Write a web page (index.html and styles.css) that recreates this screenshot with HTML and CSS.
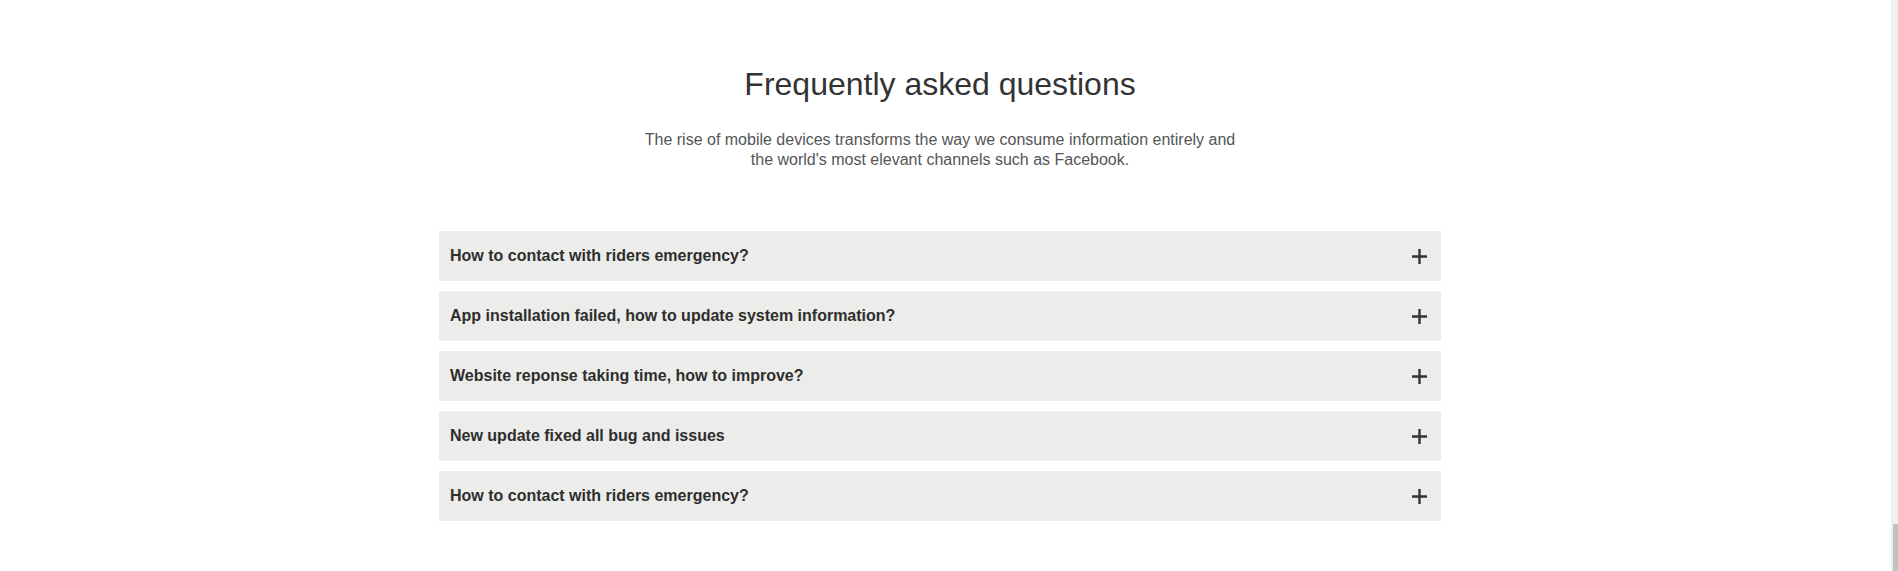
FILE: index.html
```html
<!DOCTYPE html>
<html lang="en">
<head>
<meta charset="utf-8">
<title>FAQ</title>
<link rel="stylesheet" href="styles.css">
</head>
<body>
<div class="page">
  <section class="faq">
    <h2 class="faq-title">Frequently asked questions</h2>
    <p class="faq-lead">The rise of mobile devices transforms the way we consume information entirely and the world's most elevant channels such as Facebook.</p>
    <div class="faq-list">
      <div class="faq-item">
        <span class="faq-q">How to contact with riders emergency?</span>
        <svg class="faq-icon" width="15" height="15" viewBox="0 0 15 15"><path d="M7.5 0V15M0 7.5H15" stroke="#333" stroke-width="2.4" fill="none"/></svg>
      </div>
      <div class="faq-item">
        <span class="faq-q">App installation failed, how to update system information?</span>
        <svg class="faq-icon" width="15" height="15" viewBox="0 0 15 15"><path d="M7.5 0V15M0 7.5H15" stroke="#333" stroke-width="2.4" fill="none"/></svg>
      </div>
      <div class="faq-item">
        <span class="faq-q">Website reponse taking time, how to improve?</span>
        <svg class="faq-icon" width="15" height="15" viewBox="0 0 15 15"><path d="M7.5 0V15M0 7.5H15" stroke="#333" stroke-width="2.4" fill="none"/></svg>
      </div>
      <div class="faq-item">
        <span class="faq-q">New update fixed all bug and issues</span>
        <svg class="faq-icon" width="15" height="15" viewBox="0 0 15 15"><path d="M7.5 0V15M0 7.5H15" stroke="#333" stroke-width="2.4" fill="none"/></svg>
      </div>
      <div class="faq-item">
        <span class="faq-q">How to contact with riders emergency?</span>
        <svg class="faq-icon" width="15" height="15" viewBox="0 0 15 15"><path d="M7.5 0V15M0 7.5H15" stroke="#333" stroke-width="2.4" fill="none"/></svg>
      </div>
    </div>
  </section>
</div>
<div class="scrollbar"><div class="scrollbar-thumb"></div></div>
</body>
</html>
```

FILE: styles.css
```css
html, body {
  margin: 0;
  padding: 0;
  background: #ffffff;
}
body {
  font-family: "Liberation Sans", Arial, sans-serif;
  color: #333333;
  overflow: hidden;
}
.page {
  width: 1880px;
}
.faq {
  width: 1002px;
  margin: 0 auto;
  padding-top: 65px;
  display: flex;
  flex-direction: column;
  align-items: center;
}
.faq-title {
  margin: 0;
  font-size: 32px;
  line-height: 38px;
  font-weight: 400;
  color: #333333;
}
.faq-lead {
  margin: 27px 0 0;
  width: 600px;
  font-size: 16px;
  line-height: 20px;
  color: #555555;
  text-align: center;
}
.faq-list {
  margin-top: 61px;
  width: 100%;
  display: flex;
  flex-direction: column;
  gap: 10px;
}
.faq-item {
  height: 50px;
  background: #ececea;
  display: flex;
  align-items: center;
  justify-content: space-between;
  padding: 0 14px 0 11px;
}
.faq-q {
  font-size: 16px;
  font-weight: 700;
  color: #2e2e2e;
}
.faq-icon {
  display: block;
  flex: none;
}
.scrollbar {
  position: fixed;
  top: 0;
  right: 0;
  width: 7px;
  height: 100%;
  background: #f0f0f0;
}
.scrollbar-thumb {
  position: absolute;
  right: 0;
  bottom: 0;
  width: 5px;
  height: 47px;
  background: #c1c1c1;
}
```
